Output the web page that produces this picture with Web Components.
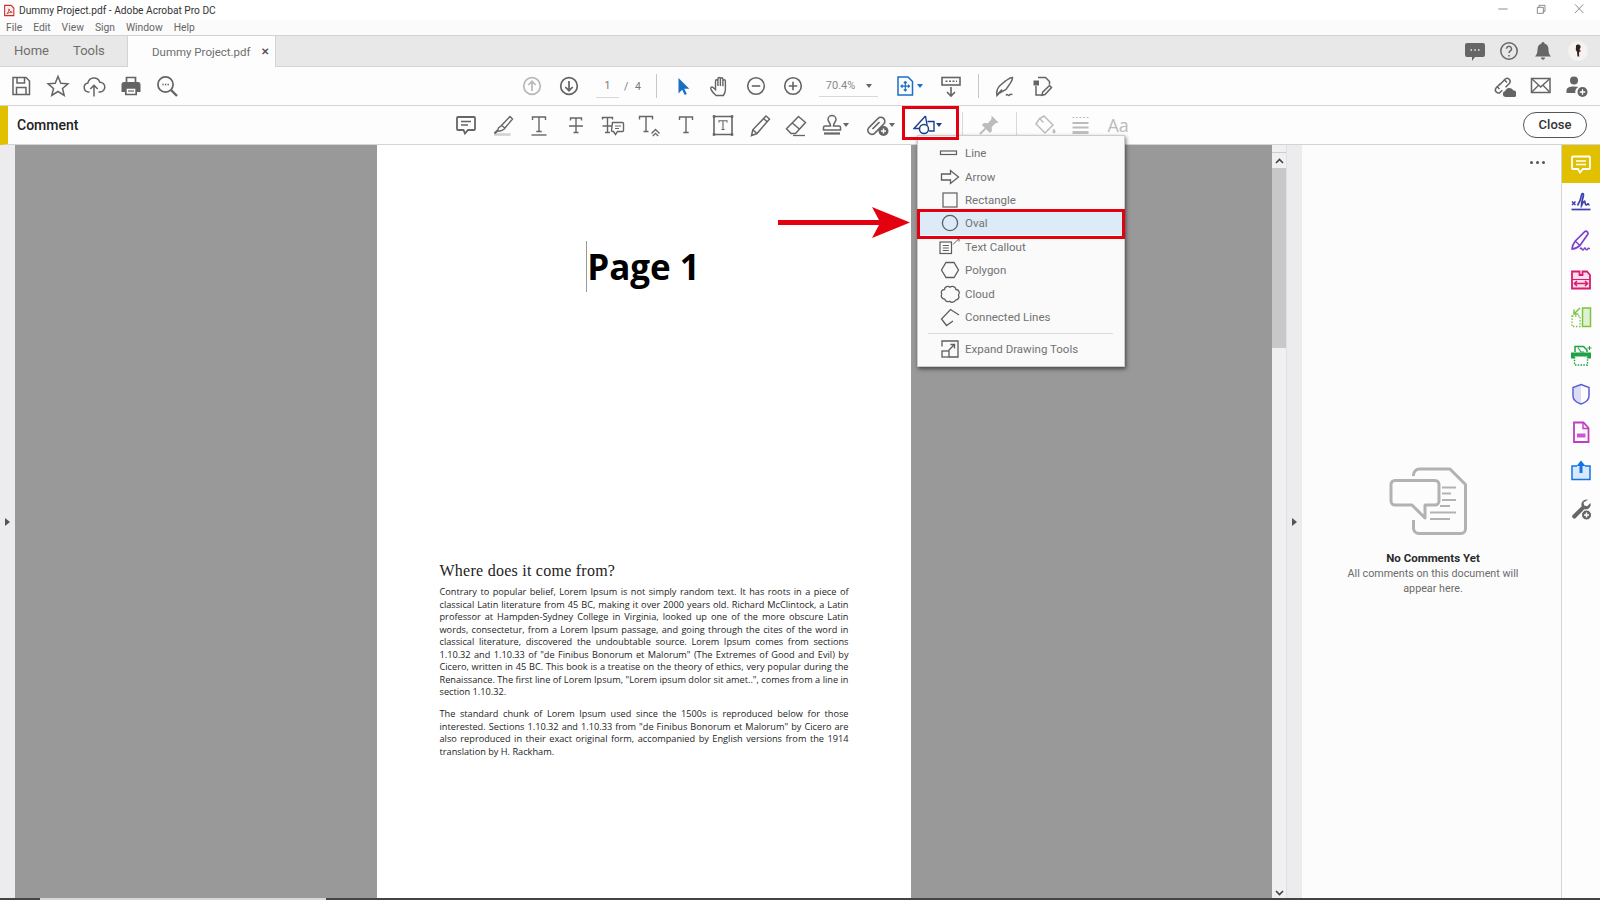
<!DOCTYPE html>
<html lang="en">
<head>
<meta charset="utf-8">
<title>Dummy Project.pdf - Adobe Acrobat Pro DC</title>
<style>
  html, body { margin: 0; padding: 0; height: 100%; overflow: hidden; background: #fff; }
  body { font-family: Roboto, "Noto Sans", sans-serif; }
</style>
</head>
<body>
<acrobat-app></acrobat-app>
<script>
(function () {
  // 24x24 unless the icon says otherwise; stroke and fill follow currentColor
  const icons = {
    pdf: '<path d="M3 2.500h12l5 5v14H3z" fill="#fdeeee" stroke="#c8322b" stroke-width="2"/><path d="M7 18c3-2 4-6 4-9 0 3 2 6 6 6-3 0-7 1-10 3z" fill="none" stroke="#c8322b" stroke-width="1.600"/>',
    min: '<path d="M5 12h14" stroke-width="1"/>',
    restore: '<path d="M6.500 9.500h9v9h-9zM9 9.500V6.500h9v9h-2.500" stroke-width="1"/>',
    close: '<path d="M6 5l12.500 13M18.500 5L6 18" stroke-width="1"/>',
    feedback: '<path d="M4 4h16a2 2 0 0 1 2 2v10a2 2 0 0 1-2 2h-8l-3 4v-4H4a2 2 0 0 1-2-2V6a2 2 0 0 1 2-2z" fill="currentColor" stroke="none"/><path d="M7.500 11h1.500M11.300 11h1.500M15 11h1.500" stroke="#eee" stroke-width="1.600"/>',
    help: '<circle cx="12" cy="12" r="8.200" stroke-width="1.500"/><path d="M9.500 9.800a2.500 2.500 0 1 1 3.800 2.100c-.9.600-1.300 1-1.300 2.100" stroke-width="1.500"/><path d="M12 16v1.600" stroke-width="1.500"/>',
    bell: '<path d="M12 3a1.500 1.500 0 0 1 1.500 1.600c3 .8 4 3.300 4 6.400 0 3 1 5 2.500 6.500H4c1.500-1.500 2.500-3.500 2.500-6.500 0-3.100 1-5.600 4-6.400A1.500 1.500 0 0 1 12 3zM10 18.600h4c0 1.300-.9 2.200-2 2.200s-2-.9-2-2.200z" fill="currentColor" stroke="none"/>',
    save: '<path d="M4 3.500h13l3.500 3.500v13.500H4z"/><path d="M8 3.500v5.500h7.500V3.500M7.500 20.500v-7h9.500v7" />',
    star: '<path d="M12 2.500l2.800 6.700 7.100.6-5.400 4.600 1.700 7L12 17.500l-6.200 3.900 1.700-7-5.400-4.600 7.100-.6z"/>',
    upload: '<path d="M7.500 18H6.500a4.600 4.600 0 0 1-.6-9.100 6.200 6.200 0 0 1 11.900-.7 4.700 4.700 0 0 1 .2 9.800h-1.500"/><path d="M12 22.500V11.500M8.300 15l3.700-3.700 3.700 3.700"/>',
    print: '<path d="M7.500 8V3.500h9V8" stroke-width="1.700"/><path d="M5 8h14a2.500 2.500 0 0 1 2.500 2.500V18H18v-4H6v4H2.500v-7.500A2.500 2.500 0 0 1 5 8z" fill="currentColor" stroke="none"/><path d="M6.800 14h10.400v6.500H6.800z" stroke-width="1.700"/><path d="M9 17h6" stroke-width="1.200"/>',
    search: '<circle cx="10.500" cy="10.500" r="7.600" stroke-width="1.700"/><path d="M16 16l6 6" stroke-width="2.400"/><path d="M7.300 10.500h1.400M9.900 10.500h1.400M12.500 10.500h1.400" stroke-width="1.500"/>',
    up: '<circle cx="12" cy="12" r="8.300" stroke-width="1.700"/><path d="M12 17V7.500M8.300 11L12 7.300 15.700 11" stroke-width="1.700"/>',
    down: '<circle cx="12" cy="12" r="8.300" stroke-width="1.700"/><path d="M12 7v9.500M8.300 13L12 16.700 15.700 13" stroke-width="1.700"/>',
    cursor: '<path d="M7.500 4v15.500l3.700-3.800 2.500 5.300 2.100-1-2.500-5.200h5z" fill="currentColor" stroke="none"/>',
    hand: '<path d="M8 21.500c-1.700-1.600-4.600-4.800-5.200-6.800-.4-1.400 1.200-2.300 2.300-1.300L7.500 15.600V7c0-1.700 2.400-1.700 2.400 0v5V4.800c0-1.700 2.500-1.700 2.500 0V12 5c0-1.700 2.500-1.700 2.500 0v7.200V7c0-1.700 2.500-1.700 2.500 0v8.500c0 3-1 4.500-2 6z" stroke-width="1.400"/>',
    minus: '<circle cx="12" cy="12" r="8.300" stroke-width="1.600"/><path d="M7.800 12h8.400" stroke-width="1.600"/>',
    plus: '<circle cx="12" cy="12" r="8.300" stroke-width="1.600"/><path d="M7.800 12h8.400M12 7.800v8.400" stroke-width="1.600"/>',
    fit: '<path d="M5 3h10l4.500 4.500V21H5z" stroke-width="1.500"/><path d="M12.300 7.500v9.500M8 12.200h8.600M10.800 9l1.500-1.500L13.800 9M10.800 15.500l1.500 1.500 1.500-1.500M9.500 10.700L8 12.200l1.500 1.500M15 10.700l1.500 1.500-1.500 1.500" stroke-width="1.200"/>',
    reader: '<rect x="3" y="3.500" width="18" height="7.500" fill="none" stroke-width="1.600"/><path d="M6.500 7.200h2M10 7.200h2M13.500 7.200h2M17 7.200h1" stroke-width="1.600"/><path d="M12 13v9M8 18l4 4 4-4" stroke-width="1.600"/>',
    pen: '<path d="M20.500 3.500c0 3-1.500 4-2.300 5.800l-4.400 6.400c-3.500 1.800-6 2.200-8.800 5.800-.6-3.500.2-7.300 2.800-9.800L13.500 7c1.800-.8 3.700-3.500 7-3.500z" stroke-width="1.500"/><path d="M5 21l5-5.500M14 21.500c1.500-2.500 2 1 3.200-.3s1.300-1 3.300-.7" stroke-width="1.400"/>',
    fileedit: '<path d="M8 3.500h7.500l4 4v3" stroke-width="1.500"/><path d="M3.500 6.500H9v5H3.500z" fill="currentColor" stroke="none"/><path d="M6 12v9h6" stroke-width="1.500"/><path d="M19.500 11.500l2 2L15 20.500l-3 .7.700-3z" stroke-width="1.500"/>',
    linkcloud: '<path d="M10.500 11.500l-4.500 4.600a3 3 0 0 0 4.200 4.200l2-2M9.500 13l5.800-6a3 3 0 0 1 4.200 4.200l-4 4" stroke-width="1.500" transform="translate(-2 -2)"/><path d="M6 13.500l2.500 2.500M13 6.500l3 3" stroke-width="1.500" transform="translate(-1 -1)"/><path d="M13.500 23a3 3 0 0 1-.4-5.900 4.500 4.500 0 0 1 8.400-.6 3.300 3.300 0 0 1 .8 6.500z" fill="currentColor" stroke="none"/>',
    mail: '<path d="M2.500 4.500h18.500v14H2.500z" stroke-width="1.500"/><path d="M2.500 4.500l9.200 8.500L21 4.500M2.500 18.500l7-7.200M21 18.500l-7-7.200" stroke-width="1.300"/>',
    useradd: '<circle cx="9" cy="6.500" r="4" fill="currentColor" stroke="none"/><path d="M1.500 19v-2.500c0-2.700 2.800-4 7.500-4 1.800 0 3.300.2 4.500.6-2.500 1.200-3.600 3.400-3.200 5.900z" fill="currentColor" stroke="none"/><circle cx="17.500" cy="18" r="5" fill="currentColor" stroke="none"/><path d="M14.800 18h5.400M17.500 15.300v5.400" stroke="#fff" stroke-width="1.300"/>',
    note: '<path d="M4 4h16a1 1 0 0 1 1 1v11a1 1 0 0 1-1 1h-6l-3 3.500L9.500 17H4a1 1 0 0 1-1-1V5a1 1 0 0 1 1-1z" stroke-width="1.800"/><path d="M7 8.500h10M7 12h7" stroke-width="1.300"/>',
    highlight: '<path d="M19 3.500l2.500 2.500-7.500 9-3.500-2.500zM10.500 12.500l-3 2.500-1 2.700 2 .5 3-1 2.500-1.700" stroke-width="1.400"/><path d="M3 21.500h16.500" stroke="#d4d4d4" stroke-width="2.800"/><path d="M3.500 20.500l3-3" stroke-width="2.200"/>',
    tunder: '<path d="M5.500 7V4h13v3M5.500 4h13M12 4v14.500M9.300 18.500h5.400" stroke-width="1.400"/><path d="M4.500 22h15" stroke-width="1.400"/>',
    tstrike: '<path d="M6.500 7.500V5h11v2.500M6.500 5h11M12 5v14M9.500 19.500h5M5 13h14" stroke-width="1.400"/>',
    treplace: '<path d="M1.500 6.500V4.500h10v2M1.500 4.500h10M6.500 4.500v15M4 19.500h5M1.500 13h10" stroke-width="1.400"/><path d="M11.500 9.500h10a1 1 0 0 1 1 1v7a1 1 0 0 1-1 1h-5l-2 3-2-3h-1a1 1 0 0 1-1-1z" fill="#fff" stroke-width="1.400"/><path d="M14 13h6M14 15.500h4" stroke-width="1.100"/>',
    tcaret: '<path d="M2.500 6.500V3.500h13v3M2.500 3.500h13M9 3.500v15M6.500 18.500h5" stroke-width="1.400"/><path d="M14.500 20.500L18.500 16.500l4 4M15.800 23l2.700-2.700 2.700 2.700" stroke-width="1.300"/>',
    ttype: '<path d="M5.500 7V4h13v3M5.500 4h13M12 4v15.500M9.300 19.500h5.400" stroke-width="1.400"/>',
    tbox: '<path d="M3 3.500h18v18H3z" stroke-width="1.600"/><path d="M2 2.500h2v2H2zM20 2.500h2v2h-2zM2 20.500h2v2H2zM20 20.500h2v2h-2z" fill="currentColor" stroke-width=".6"/><path d="M8 9.500V7.800h8v1.700M12 7.800v8.700M10.400 16.500h3.200" stroke-width="1.100"/>',
    pencil: '<path d="M18 3l3.500 3L9 20.500l-5.500 2 1.300-5.700zM15.500 5.500l3.700 3.300M4.800 16.800l4.200 3.700" stroke-width="1.500"/>',
    eraser: '<path d="M14.500 3.500l7 6-10 11H7L2.500 15.800zM8 9.800l7.300 6.200" stroke-width="1.500"/><path d="M9 22.500h12" stroke-width="1.300"/>',
    stamp: '<path d="M12 2.500a4 4 0 0 1 4 4c0 2.200-2.500 3-2.500 6.500H19a1.500 1.500 0 0 1 1.500 1.500V17h-17v-2.500A1.500 1.500 0 0 1 5 13h5.500c0-3.500-2.500-4.300-2.500-6.500a4 4 0 0 1 4-4z" stroke-width="1.500"/><path d="M4 20.500h16" stroke-width="2.200"/>',
    attach: '<path d="M12.500 16.500l-4 3.800a4 4 0 0 1-5.500-5.800L12 5.500a4 4 0 0 1 5.800 5.500l-8.500 8.500M13.500 9l-7 7" stroke-width="1.700"/><circle cx="17.500" cy="18" r="5" fill="currentColor" stroke="none"/><path d="M15 18h5M17.500 15.500v5" stroke="#fff" stroke-width="1.400"/>',
    shapes: '<path d="M12.500 3L1 15.500h5.500M12.500 3l1.500 9M14.500 8.500h6.500V18h-5" stroke-width="1.400"/><circle cx="11" cy="16" r="4.500" stroke-width="1.500"/>',
    pin: '<path d="M14.500 2.500l7 7-3 .8-3.800 3.700.2 4-2 2-8-8 2-2 4 .2L14.500 6z" fill="currentColor" stroke="none"/><path d="M8.500 15.500L3 21" stroke-width="1.800"/>',
    bucket: '<path d="M11 3l9 9-8 8-9-9 3.500-5.500zM6.500 5.500l4 4" stroke-width="1.500"/><path d="M21 15.500c1 1.500 1.500 2.300 1.500 3.200a1.500 1.500 0 0 1-3 0c0-.9.500-1.700 1.500-3.200z" fill="currentColor" stroke="none"/>',
    lines: '<path d="M3.500 4.500h2M7 4.500h2M10.500 4.500h2M14 4.500h2M17.500 4.500h2" stroke-width="1.200"/><path d="M3.500 10h16M3.500 14.500h16" stroke-width="2"/><path d="M3.500 19.500h16" stroke-width="2.800"/>',
    line: '<rect x="2.500" y="10" width="16" height="3.500" stroke-width="1.200"/>',
    arrow: '<path d="M3.500 9h9V5.500l8 6.500-8 6.500V15h-9z" stroke-width="1.300"/>',
    rect: '<rect x="5" y="5" width="14" height="14" stroke-width="1.200"/>',
    oval: '<circle cx="12" cy="12" r="7.600" stroke-width="1.300"/>',
    callout: '<rect x="2" y="7" width="11.500" height="11.500" stroke-width="1.200"/><path d="M4.800 10.500h6M4.800 13h6M4.800 15.500h6" stroke-width="1"/><path d="M15 9.500l6-6M18 3.500h3v3" stroke-width="1"/>',
    polygon: '<path d="M8 4.500h8l4.500 7.500-4.500 7.500H8L3.500 12z" stroke-width="1.300"/>',
    cloud: '<path d="M6.500 7.500a3.300 3.300 0 0 1 5.500-2.300 3.800 3.800 0 0 1 6 2.300 3.300 3.300 0 0 1 2.500 5.500 3.500 3.500 0 0 1-3 5.200 3.600 3.600 0 0 1-5.800 1 3.500 3.500 0 0 1-5-2 3.500 3.500 0 0 1-3-5.200 3 3 0 0 1 2.800-4.500z" stroke-width="1.300"/>',
    connected: '<path d="M21 10L12.500 4.500 3.500 14l5 6.500 6.500-4.500" stroke-width="1.300"/>',
    expand: '<path d="M4 9.500V4h16v16h-9" stroke-width="1.300"/><rect x="4" y="14" width="7" height="6" stroke-width="1.300"/><path d="M10.500 13.500l6-6M12.500 7.500h4v4" stroke-width="1.300"/>',
    railnote: '<path d="M4 4.500h16a1 1 0 0 1 1 1V16a1 1 0 0 1-1 1h-6l-3 3.500-2-3.500H4a1 1 0 0 1-1-1V5.500a1 1 0 0 1 1-1z" stroke-width="1.800"/><path d="M7 9h10M7 12.500h10" stroke-width="1.500"/>',
    sign: '<path d="M3 11.500l3.500 3.500M6.500 11.500L3 15" stroke-width="1.500"/><path d="M8.500 15.500c2-3 3.500-7 4-10.500.3-2 2.300-2 1.900.5-.5 3-2 6.500-1.900 10 .8-1.500 1.500-3.800 2.800-4.300 1-.3.600 3.800 1.700 3.800 1 0 1.300-1 2-1.200s.6 1.200 1.500 1" stroke-width="1.700"/><path d="M2.500 19.500h19" stroke-width="1.700"/>',
    fillsign: '<path d="M16 3.500c1.500-1 3.800.8 2.800 2.800L11 17.500c-1.800 1.500-5.500 3.500-8 3.500.2-2.500 1.700-6 3.300-8z" stroke-width="1.700"/><path d="M6 13l5 4.500" stroke-width="1.500"/><path d="M11 21c1-1.500 1.500-1.500 2 0s1.500 1.200 2 0 1.200-1.200 1.700 0 1.500 1 2 0 1.300-1 2 0" stroke-width="1.500"/>',
    organize: '<path d="M3 4.500h7.500V8h3V4.500H18l3 3.500v13.500H3z" fill="#fbdce9" stroke-width="1.800"/><path d="M3 12.500h18" stroke-width="1"/><path d="M5.500 16.500h13M8 14l-2.500 2.500L8 19M16 14l2.500 2.500L16 19" stroke-width="1.600"/>',
    compare: '<rect x="13.500" y="3" width="8" height="18.500" fill="#dff2cf" stroke-width="1.500"/><path d="M3 11h8v10.500H3z" stroke-dasharray="1.500 1.500" stroke-width="1.300"/><path d="M11 3L5.500 8.500M5 4.500V9h4.500" stroke-width="1.500"/>',
    scan: '<path d="M6 9V3.500h8.500L18 7v2" stroke-width="1.500"/><path d="M2 9.500h20v6h-3.500v-2h-13v2H2z" fill="currentColor" stroke="none"/><path d="M5.500 14v8h13v-8" stroke-dasharray="1.500 1.300" stroke-width="1.400"/><path d="M20.500 3v4M18.500 5h4" stroke-width="1"/><path d="M9 4.500l3 4.500h3" stroke-width="1.100"/>',
    shield: '<path d="M12 2.500l8 3v8.500c0 3.500-3.500 6.500-8 8-4.500-1.500-8-4.500-8-8V5.500z" fill="none" stroke-width="1.500"/><path d="M12 3v18.500c-4-1.300-7.500-4-7.500-7.500V6z" fill="currentColor" opacity=".2" stroke="none"/>',
    filepage: '<path d="M5 2.500h9.500L19.500 8v14H5z" stroke-width="1.800"/><path d="M14 2.500V8.500h5.500" stroke-width="1.400"/><rect x="8" y="13.500" width="8.500" height="4" fill="currentColor" stroke="none" opacity=".85"/>',
    share: '<path d="M8 8H3v13.500h18V8h-5" fill="#d8e9fb" stroke-width="1.500"/><path d="M12 15V5" stroke-width="3"/><path d="M7.500 8L12 2.500 16.500 8z" fill="currentColor" stroke="none"/>',
    wrench: '<path d="M19 2.800a5 5 0 0 0-6.300 6.400L3.500 18.300a2.200 2.200 0 0 0 3 3l6.200-6.300 2.500-2.700a5 5 0 0 0 6.200-6.300l-3.200 3.200-3-.8-.7-2.900z" fill="currentColor" stroke="none"/><circle cx="17.500" cy="18" r="5" fill="currentColor" stroke="#fdfdfd" stroke-width="1"/><path d="M15 18h5M17.500 15.500v5" stroke="#fff" stroke-width="1.500"/>'
  };

  customElements.define('acro-icon', class extends HTMLElement {
    connectedCallback() {
      const size = this.getAttribute('size') || 24;
      const root = this.shadowRoot || this.attachShadow({mode: 'open'});
      root.innerHTML = `
      <style>
        :host { display: block; width: ${size}px; height: ${size}px; flex: none; }
        svg { display: block; width: 100%; height: 100%; fill: none; stroke: currentColor; stroke-width: 1.500; }
      </style>
      <svg viewBox="0 0 24 24">${icons[this.getAttribute('name')] || ''}</svg>`;
    }
  });

  // little dropdown triangle next to a toolbar icon
  customElements.define('drop-caret', class extends HTMLElement {
    constructor() {
      super();
      this.attachShadow({mode: 'open'}).innerHTML = `
      <style>
        :host { display: block; width: 0; height: 0; flex: none; border: 3px solid transparent; border-top: 4px solid currentColor; border-bottom: 0; }
      </style>`;
    }
  });

  function component(name, html) {
    const template = document.createElement('template');
    template.innerHTML = html;
    customElements.define(name, class extends HTMLElement {
      constructor() {
        super();
        this.attachShadow({mode: 'open'}).appendChild(template.content.cloneNode(true));
      }
    });
  }

  component('title-bar', `
  <style>
    :host { display: flex; align-items: center; height: 20px; background: #fff; padding: 0 2px 0 3px; flex: none; }
    .name { margin-left: 3px; font-size: 10.200px; color: #333; flex: 1; white-space: nowrap; }
    .ctl { width: 38px; display: flex; justify-content: center; margin-top: -3px; color: #555; }
  </style>
  <acro-icon name="pdf" size="13"></acro-icon>
  <span class="name">Dummy Project.pdf - Adobe Acrobat Pro DC</span>
  <span class="ctl"><acro-icon name="min" size="16"></acro-icon></span>
  <span class="ctl"><acro-icon name="restore" size="16"></acro-icon></span>
  <span class="ctl"><acro-icon name="close" size="16"></acro-icon></span>`);

  component('menu-bar', `
  <style>
    :host { display: flex; align-items: center; gap: 11px; height: 15px; background: #fbfbfb; padding-left: 6px; flex: none; font-size: 10.300px; color: #666; border-bottom: 1px solid #d2d2d2; }
  </style>
  <span>File</span><span>Edit</span><span>View</span><span>Sign</span><span>Window</span><span>Help</span>`);

  component('tab-bar', `
  <style>
    :host { display: flex; align-items: stretch; height: 30px; background: #e8e8e8; flex: none; border-bottom: 1px solid #d4d4d4; font-size: 13px; color: #6e6e6e; }
    .home { padding-left: 14px; width: 59px; line-height: 30px; }
    .tools { width: 54px; line-height: 30px; }
    .tab { width: 149px; background: #fdfdfd; border-left: 1px solid #d4d4d4; border-right: 1px solid #d4d4d4; margin-bottom: -1px; display: flex; align-items: center; box-sizing: border-box; padding-left: 24px; font-size: 11.500px; white-space: nowrap; }
    .x { margin-left: 10px; font-size: 10px; font-weight: 700; color: #555; }
    .right { margin-left: auto; display: flex; align-items: center; padding-right: 12px; color: #666; }
    .right acro-icon { margin-right: 10px; }
    .avatar { margin-left: 3px; }
    svg { display: block; }
  </style>
  <span class="home">Home</span><span class="tools">Tools</span>
  <span class="tab">Dummy Project.pdf<span class="x">✕</span></span>
  <div class="right">
    <acro-icon name="feedback"></acro-icon>
    <acro-icon name="help"></acro-icon>
    <acro-icon name="bell"></acro-icon>
    <svg class="avatar" width="20" height="20" viewBox="0 0 20 20"><circle cx="10" cy="10" r="10" fill="#f6f2f1"/><path d="M8 4.500c1-1.300 3.500-1.200 4.300.2.800 1.500-.1 2.700-.7 3.300l.7 2.200-1.300 1.200.2 4.100-1.700.1-.5-4.800-1.200-1.800z" fill="#2c2321"/><path d="M11.300 8.500l1.700 1.300-1.200 1.500z" fill="#b33b33"/></svg>
  </div>`);

  component('main-toolbar', `
  <style>
    :host { display: flex; align-items: center; height: 38px; background: #fdfdfd; flex: none; border-bottom: 1px solid #d4d4d4; color: #646464; padding-left: 9px; }
    acro-icon { margin-right: 12.600px; }
    .sep { width: 1px; height: 24px; background: #c8c8c8; flex: none; }
    .page { width: 42px; flex: none; display: flex; font-size: 10.500px; color: #777; align-self: stretch; align-items: center; box-sizing: border-box; white-space: nowrap; }
    .page b { flex: none; font-weight: 400; width: 23px; text-align: center; border-bottom: 1px solid #d8d8d8; line-height: 22px; }
    .page span { flex: none; margin-left: 5px; letter-spacing: 2px; }
    .zoom { width: 59px; height: 22px; flex: none; border-bottom: 1px solid #d8d8d8; display: flex; align-items: center; font-size: 11px; color: #888; padding-left: 7px; box-sizing: border-box; }
    .zoom drop-caret { margin-left: 11px; color: #666; }
    .right { margin-left: auto; display: flex; padding-right: 11px; }
    .right acro-icon { margin: 0 0 0 12.500px; }
  </style>
  <acro-icon name="save"></acro-icon>
  <acro-icon name="star"></acro-icon>
  <acro-icon name="upload"></acro-icon>
  <acro-icon name="print"></acro-icon>
  <acro-icon name="search"></acro-icon>
  <acro-icon name="up" style="color:#b8b8b8;margin-left:328.500px"></acro-icon>
  <acro-icon name="down"></acro-icon>
  <div class="page" style="margin-left:2.400px"><b>1</b><span>/ 4</span></div>
  <div class="sep" style="margin:0 14px 0 18px"></div>
  <acro-icon name="cursor" style="color:#1a6fc4"></acro-icon>
  <acro-icon name="hand"></acro-icon>
  <acro-icon name="minus"></acro-icon>
  <acro-icon name="plus" style="margin-right:0"></acro-icon>
  <div class="zoom" style="margin:0 15px 0 14px">70.4%<drop-caret></drop-caret></div>
  <acro-icon name="fit" style="color:#1a6fc4;margin-right:0"></acro-icon>
  <drop-caret style="color:#1a6fc4;margin-right:16px"></drop-caret>
  <acro-icon name="reader" style="margin-right:15px"></acro-icon>
  <div class="sep" style="margin-right:13px"></div>
  <acro-icon name="pen" style="margin-right:14px"></acro-icon>
  <acro-icon name="fileedit"></acro-icon>
  <div class="right">
    <acro-icon name="linkcloud"></acro-icon>
    <acro-icon name="mail"></acro-icon>
    <acro-icon name="useradd"></acro-icon>
  </div>`);

  component('comment-toolbar', `
  <style>
    :host { display: flex; align-items: center; height: 38px; background: #fdfdfd; flex: none; border-bottom: 1px solid #d4d4d4; color: #666; border-left: 8px solid #e1c000; }
    .title { margin-left: 9px; width: 437px; flex: none; font-size: 14px; font-weight: 500; color: #222; }
    .cell { margin-right: 12.700px; }
    .sep { width: 1px; height: 26px; background: #d8d8d8; flex: none; }
    .off { color: #bcbcbc; }
    .aa { color: #bbb; font-size: 18px; margin-left: 13px; width: 24px; text-align: center; font-family: "Open Sans", sans-serif; }
    .close { margin-left: auto; margin-right: 13px; width: 64px; height: 26px; border: 1px solid #555; border-radius: 14px; box-sizing: border-box; font-size: 13px; font-weight: 500; color: #333; text-align: center; line-height: 23px; background: #fff; }
  </style>
  <span class="title">Comment</span>
  <acro-icon class="cell" name="note"></acro-icon>
  <acro-icon class="cell" name="highlight"></acro-icon>
  <acro-icon class="cell" name="tunder"></acro-icon>
  <acro-icon class="cell" name="tstrike"></acro-icon>
  <acro-icon class="cell" name="treplace"></acro-icon>
  <acro-icon class="cell" name="tcaret"></acro-icon>
  <acro-icon class="cell" name="ttype"></acro-icon>
  <acro-icon class="cell" name="tbox"></acro-icon>
  <acro-icon class="cell" name="pencil"></acro-icon>
  <acro-icon name="eraser"></acro-icon>
  <acro-icon name="stamp" style="margin-left:12px"></acro-icon>
  <drop-caret style="margin-left:-1px"></drop-caret>
  <acro-icon name="attach" style="margin-left:17px"></acro-icon>
  <drop-caret style="margin-left:-1px"></drop-caret>
  <acro-icon name="shapes" style="margin-left:18px;color:#1b3f8b"></acro-icon>
  <drop-caret style="margin-left:-1px;color:#1b3f8b"></drop-caret>
  <div class="sep" style="margin-left:20px"></div>
  <acro-icon class="off" name="pin" style="margin-left:14px"></acro-icon>
  <div class="sep" style="margin-left:15px"></div>
  <acro-icon class="off" name="bucket" style="margin-left:16px"></acro-icon>
  <acro-icon class="off" name="lines" style="margin-left:12px"></acro-icon>
  <span class="aa">Aa</span>
  <span class="close">Close</span>`);

  component('pdf-page', `
  <style>
    :host { display: block; width: 534px; background: #fff; box-sizing: border-box; padding: 96px 62px 0 63px; color: #1c1c1c; align-self: stretch; overflow: hidden; }
    .top { text-align: center; margin-left: -1px; }
    h1 { position: relative; display: inline-block; margin: 0; font: 700 35px/51px "Open Sans", sans-serif; color: #000; }
    h1::before { content: ""; position: absolute; left: -1px; top: 0; bottom: 0; width: 1px; background: #999; }
    h2 { margin: 269px 0 0; font: 400 16px/20px "Liberation Serif", serif; color: #222; letter-spacing: .25px; }
    p { margin: 0 0 9.700px; font: 9.200px/12.500px "Open Sans", sans-serif; }
    p span { display: block; text-align: justify; text-align-last: justify; white-space: nowrap; }
    p span:last-child { text-align-last: left; }
    .first { margin-top: 5px; }
  </style>
  <div class="top"><h1>Page 1</h1></div>
  <h2>Where does it come from?</h2>
  <p class="first"><span>Contrary to popular belief, Lorem Ipsum is not simply random text. It has roots in a piece of</span><span>classical Latin literature from 45 BC, making it over 2000 years old. Richard McClintock, a Latin</span><span>professor at Hampden-Sydney College in Virginia, looked up one of the more obscure Latin</span><span>words, consectetur, from a Lorem Ipsum passage, and going through the cites of the word in</span><span>classical literature, discovered the undoubtable source. Lorem Ipsum comes from sections</span><span>1.10.32 and 1.10.33 of "de Finibus Bonorum et Malorum" (The Extremes of Good and Evil) by</span><span>Cicero, written in 45 BC. This book is a treatise on the theory of ethics, very popular during the</span><span>Renaissance. The first line of Lorem Ipsum, "Lorem ipsum dolor sit amet..", comes from a line in</span><span>section 1.10.32.</span></p>
  <p><span>The standard chunk of Lorem Ipsum used since the 1500s is reproduced below for those</span><span>interested. Sections 1.10.32 and 1.10.33 from "de Finibus Bonorum et Malorum" by Cicero are</span><span>also reproduced in their exact original form, accompanied by English versions from the 1914</span><span>translation by H. Rackham.</span></p>`);

  component('doc-view', `
  <style>
    :host { flex: 1; display: flex; justify-content: center; background: #999; min-width: 0; }
  </style>
  <pdf-page></pdf-page>`);

  component('side-handle', `
  <style>
    :host { display: flex; align-items: center; justify-content: center; width: 15px; flex: none; background: #ececef; }
    i { display: block; width: 0; height: 0; border: 4px solid transparent; border-left: 5px solid #555; border-right: 0; }
  </style>
  <i></i>`);

  component('v-scroll', `
  <style>
    :host { display: flex; flex-direction: column; width: 15px; flex: none; background: #f0f0f0; box-sizing: border-box; border-right: 1px solid #e0e0e0; }
    .btn { flex: none; height: 15px; display: flex; align-items: center; justify-content: center; }
    .btn.end { height: 10px; }
    .cap { height: 7px; flex: none; border-bottom: 1px solid #ccc; }
    .thumb { height: 180px; flex: none; background: #c8c8c8; }
    .rest { flex: 1; }
    svg { display: block; }
  </style>
  <div class="cap"></div>
  <div class="btn"><svg width="9" height="6" viewBox="0 0 9 6"><path d="M1 5l3.500-3.500L8 5" fill="none" stroke="#444" stroke-width="1.600"/></svg></div>
  <div class="thumb"></div>
  <div class="rest"></div>
  <div class="btn end"><svg width="9" height="6" viewBox="0 0 9 6"><path d="M1 1l3.500 3.500L8 1" fill="none" stroke="#444" stroke-width="1.600"/></svg></div>`);

  component('comments-panel', `
  <style>
    :host { display: flex; flex-direction: column; align-items: center; width: 260px; flex: none; box-sizing: border-box; background: #fcfcfc; border-right: 1px solid #d4d4d4; }
    .more { align-self: flex-end; margin: 16px 16px 0 0; display: flex; gap: 3px; }
    .more i { display: block; width: 3px; height: 3px; border-radius: 50%; background: #555; }
    svg { display: block; margin-top: 303px; margin-right: 6px; fill: none; stroke: #b2b2b2; }
    .t { margin-top: 13px; font-size: 11.500px; font-weight: 700; color: #2b2b2b; line-height: 17px; margin-right: -3px; }
    .d { width: 190px; font-size: 10.750px; color: #6c6c6c; line-height: 14.500px; text-align: center; margin-right: -3px; }
  </style>
  <div class="more"><i></i><i></i><i></i></div>
  <svg width="80" height="70" viewBox="0 0 80 70">
    <path stroke-width="3" stroke-linejoin="round" d="M24.500 9V8a6 6 0 0 1 6-6H61l15.500 15.500V62a4.500 4.500 0 0 1-4.500 4.500H30a6 6 0 0 1-5.500-4.500v-9"/>
    <path stroke-width="3" stroke-linejoin="round" d="M6 13.500H46a4 4 0 0 1 4 4V34a4 4 0 0 1-4 4H36V51L23 38H6a4 4 0 0 1-4-4V17.500a4 4 0 0 1 4-4z"/>
    <path stroke-width="2" d="M53 20.500h14M53 26.500h9M53 33h14M51 39h10M41 45.500h26M41 52h20"/>
  </svg>
  <div class="t">No Comments Yet</div>
  <div class="d">All comments on this document will appear here.</div>`);

  component('tool-rail', `
  <style>
    :host { display: flex; flex-direction: column; align-items: center; width: 38px; flex: none; background: #fdfdfd; }
    .cell { height: 38.300px; flex: none; align-self: stretch; display: flex; align-items: center; justify-content: center; }
    .on { height: 38px; background: #e1c000; color: #fff; }
  </style>
  <div class="cell on"><acro-icon name="railnote"></acro-icon></div>
  <div class="cell" style="color:#3f3fb0"><acro-icon name="sign"></acro-icon></div>
  <div class="cell" style="color:#7b3fd0"><acro-icon name="fillsign"></acro-icon></div>
  <div class="cell" style="color:#d81b72"><acro-icon name="organize"></acro-icon></div>
  <div class="cell" style="color:#7cc243"><acro-icon name="compare"></acro-icon></div>
  <div class="cell" style="color:#1fa246"><acro-icon name="scan"></acro-icon></div>
  <div class="cell" style="color:#5a5fd6"><acro-icon name="shield"></acro-icon></div>
  <div class="cell" style="color:#c23bc4"><acro-icon name="filepage"></acro-icon></div>
  <div class="cell" style="color:#1473e6"><acro-icon name="share"></acro-icon></div>
  <div class="cell" style="color:#666"><acro-icon name="wrench"></acro-icon></div>`);

  component('shape-item', `
  <style>
    :host { display: flex; align-items: center; height: 23.400px; color: #5e5e5e; font-size: 11.500px; padding-left: 20px; }
    span { margin-left: 3px; color: #727272; }
  </style>
  <slot name="icon"></slot><span><slot></slot></span>`);

  component('shapes-menu', `
  <style>
    :host { display: flex; flex-direction: column; position: absolute; left: 917px; top: 135px; width: 208px; height: 232px; box-sizing: border-box; padding-top: 5.500px; background: #fafafa; border: 1px solid #ccc; box-shadow: 1px 2px 4px rgba(0,0,0,.55); }
    .on { background: #dcebf7; }
    hr { border: 0; border-top: 1px solid #dcdcdc; margin: 4px 10px 4px; width: 185px; }
  </style>
  <shape-item><acro-icon slot="icon" name="line"></acro-icon>Line</shape-item>
  <shape-item><acro-icon slot="icon" name="arrow"></acro-icon>Arrow</shape-item>
  <shape-item><acro-icon slot="icon" name="rect"></acro-icon>Rectangle</shape-item>
  <shape-item class="on"><acro-icon slot="icon" name="oval"></acro-icon>Oval</shape-item>
  <shape-item><acro-icon slot="icon" name="callout"></acro-icon>Text Callout</shape-item>
  <shape-item><acro-icon slot="icon" name="polygon"></acro-icon>Polygon</shape-item>
  <shape-item><acro-icon slot="icon" name="cloud"></acro-icon>Cloud</shape-item>
  <shape-item><acro-icon slot="icon" name="connected"></acro-icon>Connected Lines</shape-item>
  <hr>
  <shape-item><acro-icon slot="icon" name="expand"></acro-icon>Expand Drawing Tools</shape-item>`);

  component('acrobat-app', `
  <style>
    :host { display: flex; flex-direction: column; position: relative; width: 1600px; height: 900px; overflow: hidden; background: #fff; }
    main { flex: 1; display: flex; min-height: 0; }
    .strip { flex: none; height: 2px; display: flex; background: #444; }
    .strip i { display: block; margin-left: 40px; width: 286px; background: #d8d8d8; }
    .mark { position: absolute; box-sizing: border-box; border: 3px solid #e3000f; }
    .red { position: absolute; left: 778px; top: 206px; display: block; }
  </style>
  <title-bar></title-bar>
  <menu-bar></menu-bar>
  <tab-bar></tab-bar>
  <main-toolbar></main-toolbar>
  <comment-toolbar></comment-toolbar>
  <main>
    <side-handle></side-handle>
    <doc-view></doc-view>
    <v-scroll></v-scroll>
    <side-handle></side-handle>
    <comments-panel></comments-panel>
    <tool-rail></tool-rail>
  </main>
  <div class="strip"><i></i></div>
  <shapes-menu></shapes-menu>
  <div class="mark" style="left:902px;top:106px;width:57px;height:34px"></div>
  <div class="mark" style="left:917px;top:209px;width:208px;height:30px"></div>
  <svg class="red" width="134" height="33" viewBox="0 0 134 33"><path d="M0 14h101L94 1l38 15.500L94 32l7-13H0z" fill="#e3000f"/></svg>`);
})();
</script>
</body>
</html>
